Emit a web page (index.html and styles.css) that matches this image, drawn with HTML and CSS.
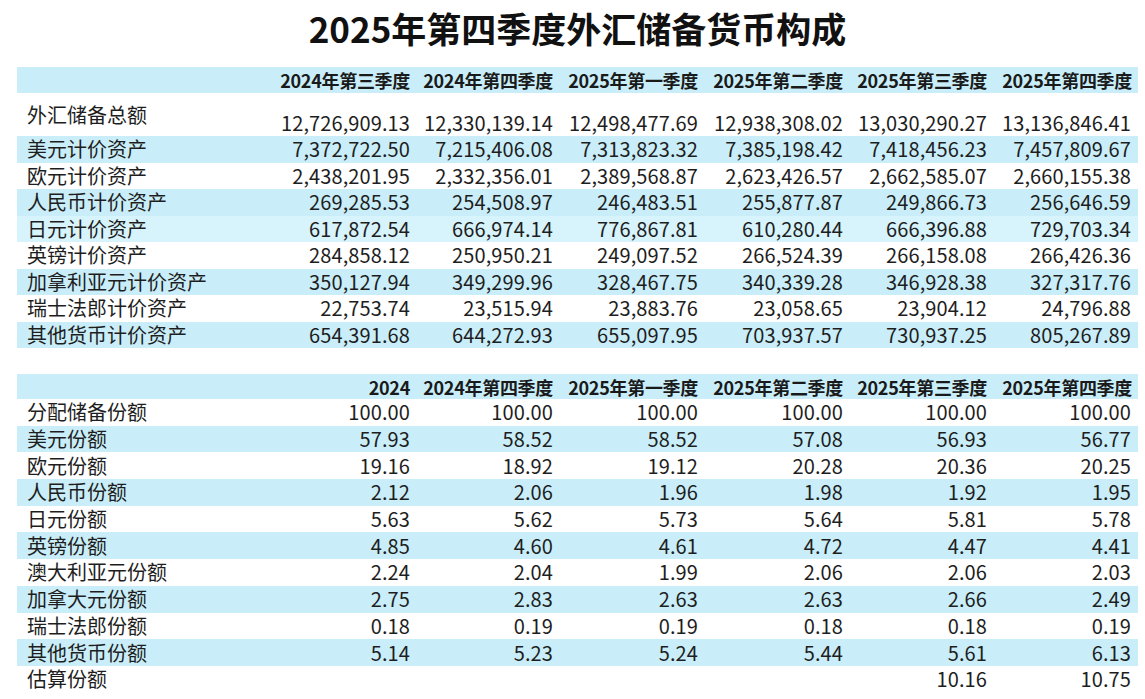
FILE: index.html
```html
<!DOCTYPE html>
<html lang="zh-CN">
<head>
<meta charset="utf-8">
<title>2025年第四季度外汇储备货币构成</title>
<link rel="stylesheet" href="styles.css">
</head>
<body>
<main class="page">
  <h1 class="title">2025年第四季度外汇储备货币构成</h1>

  <section class="table t1">
    <div class="row head blue">
      <div class="label"></div>
      <div class="num">2024年第三季度</div>
      <div class="num">2024年第四季度</div>
      <div class="num">2025年第一季度</div>
      <div class="num">2025年第二季度</div>
      <div class="num">2025年第三季度</div>
      <div class="num">2025年第四季度</div>
    </div>
    <div class="row total">
      <div class="label">外汇储备总额</div>
      <div class="num">12,726,909.13</div>
      <div class="num">12,330,139.14</div>
      <div class="num">12,498,477.69</div>
      <div class="num">12,938,308.02</div>
      <div class="num">13,030,290.27</div>
      <div class="num">13,136,846.41</div>
    </div>
    <div class="row blue">
      <div class="label">美元计价资产</div>
      <div class="num">7,372,722.50</div>
      <div class="num">7,215,406.08</div>
      <div class="num">7,313,823.32</div>
      <div class="num">7,385,198.42</div>
      <div class="num">7,418,456.23</div>
      <div class="num">7,457,809.67</div>
    </div>
    <div class="row">
      <div class="label">欧元计价资产</div>
      <div class="num">2,438,201.95</div>
      <div class="num">2,332,356.01</div>
      <div class="num">2,389,568.87</div>
      <div class="num">2,623,426.57</div>
      <div class="num">2,662,585.07</div>
      <div class="num">2,660,155.38</div>
    </div>
    <div class="row blue">
      <div class="label">人民币计价资产</div>
      <div class="num">269,285.53</div>
      <div class="num">254,508.97</div>
      <div class="num">246,483.51</div>
      <div class="num">255,877.87</div>
      <div class="num">249,866.73</div>
      <div class="num">256,646.59</div>
    </div>
    <div class="row pale">
      <div class="label">日元计价资产</div>
      <div class="num">617,872.54</div>
      <div class="num">666,974.14</div>
      <div class="num">776,867.81</div>
      <div class="num">610,280.44</div>
      <div class="num">666,396.88</div>
      <div class="num">729,703.34</div>
    </div>
    <div class="row">
      <div class="label">英镑计价资产</div>
      <div class="num">284,858.12</div>
      <div class="num">250,950.21</div>
      <div class="num">249,097.52</div>
      <div class="num">266,524.39</div>
      <div class="num">266,158.08</div>
      <div class="num">266,426.36</div>
    </div>
    <div class="row blue">
      <div class="label">加拿利亚元计价资产</div>
      <div class="num">350,127.94</div>
      <div class="num">349,299.96</div>
      <div class="num">328,467.75</div>
      <div class="num">340,339.28</div>
      <div class="num">346,928.38</div>
      <div class="num">327,317.76</div>
    </div>
    <div class="row">
      <div class="label">瑞士法郎计价资产</div>
      <div class="num">22,753.74</div>
      <div class="num">23,515.94</div>
      <div class="num">23,883.76</div>
      <div class="num">23,058.65</div>
      <div class="num">23,904.12</div>
      <div class="num">24,796.88</div>
    </div>
    <div class="row blue">
      <div class="label">其他货币计价资产</div>
      <div class="num">654,391.68</div>
      <div class="num">644,272.93</div>
      <div class="num">655,097.95</div>
      <div class="num">703,937.57</div>
      <div class="num">730,937.25</div>
      <div class="num">805,267.89</div>
    </div>
  </section>

  <section class="table t2">
    <div class="row head blue">
      <div class="label"></div>
      <div class="num">2024</div>
      <div class="num">2024年第四季度</div>
      <div class="num">2025年第一季度</div>
      <div class="num">2025年第二季度</div>
      <div class="num">2025年第三季度</div>
      <div class="num">2025年第四季度</div>
    </div>
    <div class="row">
      <div class="label">分配储备份额</div>
      <div class="num">100.00</div><div class="num">100.00</div><div class="num">100.00</div>
      <div class="num">100.00</div><div class="num">100.00</div><div class="num">100.00</div>
    </div>
    <div class="row blue">
      <div class="label">美元份额</div>
      <div class="num">57.93</div><div class="num">58.52</div><div class="num">58.52</div>
      <div class="num">57.08</div><div class="num">56.93</div><div class="num">56.77</div>
    </div>
    <div class="row">
      <div class="label">欧元份额</div>
      <div class="num">19.16</div><div class="num">18.92</div><div class="num">19.12</div>
      <div class="num">20.28</div><div class="num">20.36</div><div class="num">20.25</div>
    </div>
    <div class="row blue">
      <div class="label">人民币份额</div>
      <div class="num">2.12</div><div class="num">2.06</div><div class="num">1.96</div>
      <div class="num">1.98</div><div class="num">1.92</div><div class="num">1.95</div>
    </div>
    <div class="row">
      <div class="label">日元份额</div>
      <div class="num">5.63</div><div class="num">5.62</div><div class="num">5.73</div>
      <div class="num">5.64</div><div class="num">5.81</div><div class="num">5.78</div>
    </div>
    <div class="row blue">
      <div class="label">英镑份额</div>
      <div class="num">4.85</div><div class="num">4.60</div><div class="num">4.61</div>
      <div class="num">4.72</div><div class="num">4.47</div><div class="num">4.41</div>
    </div>
    <div class="row">
      <div class="label">澳大利亚元份额</div>
      <div class="num">2.24</div><div class="num">2.04</div><div class="num">1.99</div>
      <div class="num">2.06</div><div class="num">2.06</div><div class="num">2.03</div>
    </div>
    <div class="row blue">
      <div class="label">加拿大元份额</div>
      <div class="num">2.75</div><div class="num">2.83</div><div class="num">2.63</div>
      <div class="num">2.63</div><div class="num">2.66</div><div class="num">2.49</div>
    </div>
    <div class="row">
      <div class="label">瑞士法郎份额</div>
      <div class="num">0.18</div><div class="num">0.19</div><div class="num">0.19</div>
      <div class="num">0.18</div><div class="num">0.18</div><div class="num">0.19</div>
    </div>
    <div class="row blue">
      <div class="label">其他货币份额</div>
      <div class="num">5.14</div><div class="num">5.23</div><div class="num">5.24</div>
      <div class="num">5.44</div><div class="num">5.61</div><div class="num">6.13</div>
    </div>
    <div class="row">
      <div class="label">估算份额</div>
      <div class="num"></div><div class="num"></div><div class="num"></div>
      <div class="num"></div><div class="num">10.16</div><div class="num">10.75</div>
    </div>
  </section>
</main>
</body>
</html>
```

FILE: styles.css
```css
html, body {
  margin: 0;
  padding: 0;
  background: #ffffff;
}

body {
  font-family: "Noto Sans CJK SC", "Noto Sans", sans-serif;
  color: #1e1e1e;
}

.page {
  width: 1121px;
  margin-left: 17px;
  display: flex;
  flex-direction: column;
}

.title {
  margin: 6px 0 17px;
  font-size: 35px;
  line-height: 44px;
  font-weight: 700;
  text-align: center;
  color: #111111;
}

.table {
  display: flex;
  flex-direction: column;
}

.t2 {
  margin-top: 26px;
}

.row {
  display: grid;
  grid-template-columns: 254px 143px 143px 145px 145px 144px 147px;
  align-items: center;
  height: 26.5px;
  font-size: 20px;
}

.t2 .row {
  height: 26.7px;
}

.row.head {
  height: 26px;
  font-size: 18px;
  font-weight: 700;
}

.t2 .row.head {
  height: 25px;
}

.blue {
  background: #c9eef9;
}

.pale {
  background: #d7f3fb;
}

.label {
  padding-left: 10px;
  white-space: nowrap;
  line-height: 24px;
}

.num {
  text-align: right;
  padding-right: 4px;
  white-space: nowrap;
  line-height: 24px;
  letter-spacing: 0.1px;
}

.row .num:last-child {
  padding-right: 7px;
}

.row.head .num:last-child {
  padding-right: 6px;
}

.row.head .num {
  letter-spacing: -0.3px;
  line-height: 22px;
  color: #1a1a1a;
}

.row.total {
  height: 43px;
}

.row.total .label {
  align-self: center;
}

.row.total .num {
  align-self: end;
  padding-bottom: 1px;
}
```
